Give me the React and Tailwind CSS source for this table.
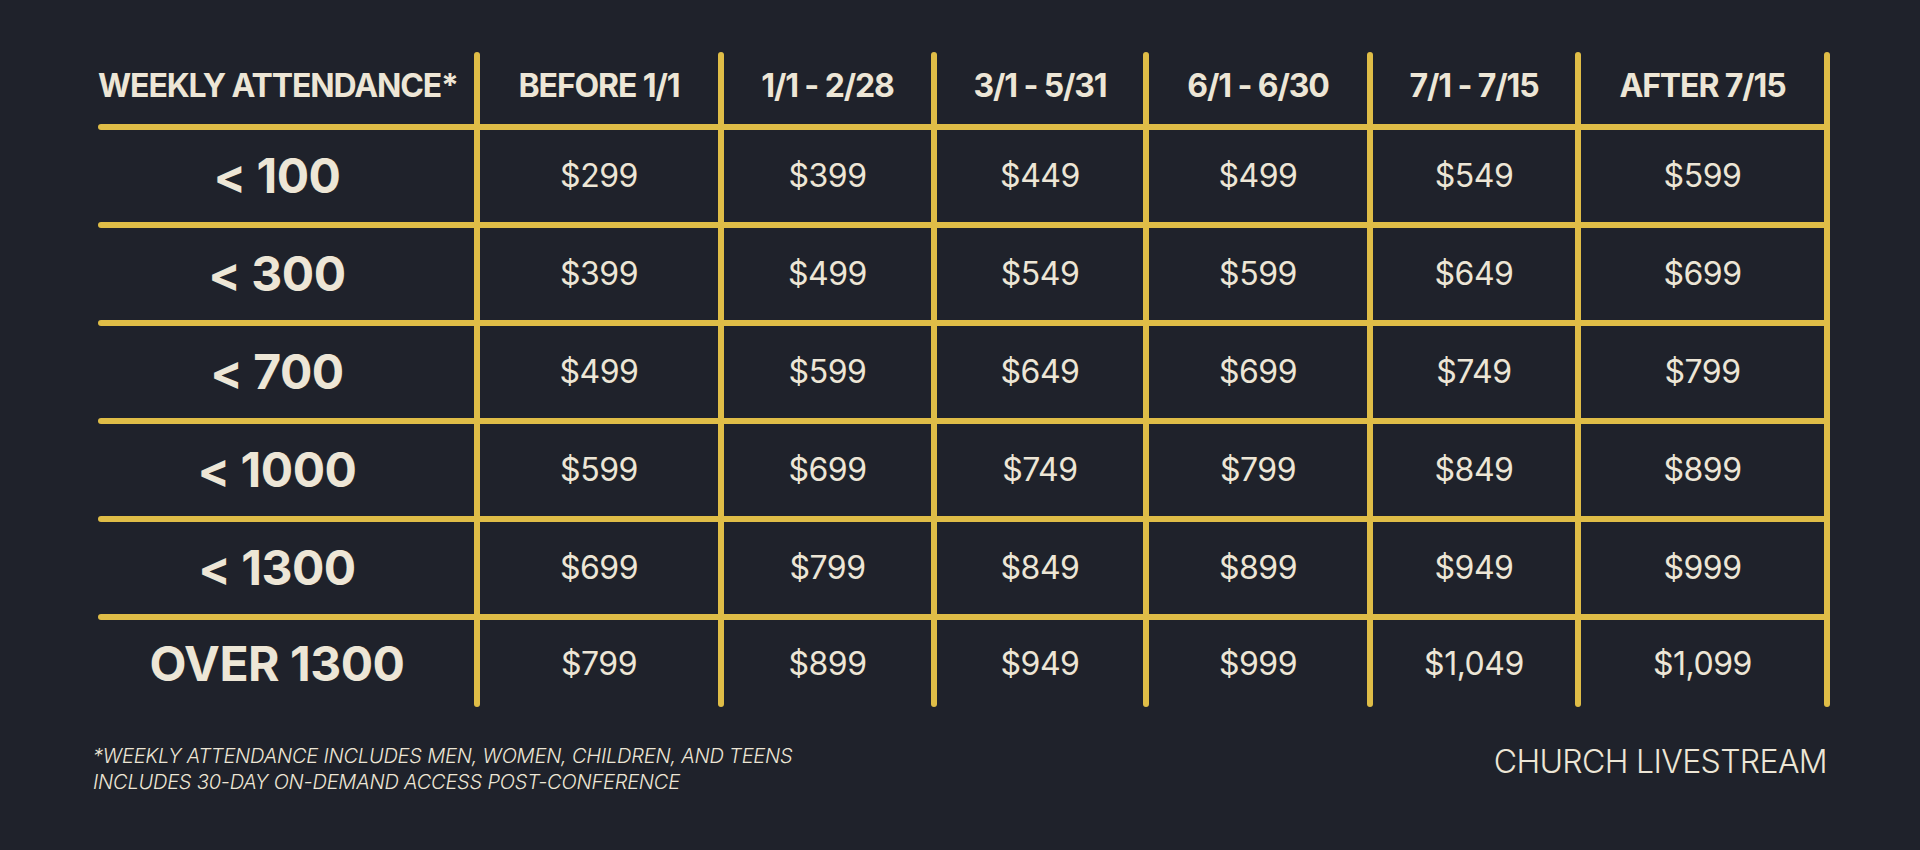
import React from 'react';

const headers = ["WEEKLY ATTENDANCE*", "BEFORE 1/1", "1/1 - 2/28", "3/1 - 5/31", "6/1 - 6/30", "7/1 - 7/15", "AFTER 7/15"];

const rows = [
  { label: "< 100", prices: ["$299", "$399", "$449", "$499", "$549", "$599"] },
  { label: "< 300", prices: ["$399", "$499", "$549", "$599", "$649", "$699"] },
  { label: "< 700", prices: ["$499", "$599", "$649", "$699", "$749", "$799"] },
  { label: "< 1000", prices: ["$599", "$699", "$749", "$799", "$849", "$899"] },
  { label: "< 1300", prices: ["$699", "$799", "$849", "$899", "$949", "$999"] },
  { label: "OVER 1300", prices: ["$799", "$899", "$949", "$999", "$1,049", "$1,099"] },
];

// widths of the price columns, between the yellow lines
const colWidths = ["w-[238px]", "w-[207px]", "w-[206px]", "w-[218px]", "w-[202px]", "w-[243px]"];

function VLine({ cap }) {
  return <div className={`w-[6px] shrink-0 bg-[#dfbd47] ${cap}`} />;
}

function HLine() {
  return <div className="h-[6px] w-[1732px] rounded-l-full bg-[#dfbd47]" />;
}

export default function App() {
  return (
    <main
      className="min-h-[850px] w-[1920px] bg-[#1f222b] pt-[52px] pl-[98px] text-[#ede6d6]"
      style={{ fontFamily: "Inter, 'Noto Sans', sans-serif" }}
    >
      <div className="flex h-[72px]">
        <div className="flex w-[376px] items-center justify-start whitespace-nowrap pb-[4px] text-[32px] font-bold tracking-[-0.035em]">
          {headers[0]}
        </div>
        {headers.slice(1).map((h, i) => (
          <React.Fragment key={h}>
            <VLine cap="rounded-t-full" />
            <div className={`flex ${colWidths[i]} items-center justify-center whitespace-nowrap pb-[4px] text-[32px] font-bold tracking-[-0.035em]`}>
              {h}
            </div>
          </React.Fragment>
        ))}
        <VLine cap="rounded-t-full" />
      </div>

      {rows.map((row, r) => {
        const last = r === rows.length - 1;
        return (
          <React.Fragment key={row.label}>
            <HLine />
            <div className={`flex ${last ? "h-[87px]" : "h-[92px]"}`}>
              <div className="flex w-[376px] items-center justify-center pr-[18px] text-[48px] font-bold tracking-[-0.01em]">
                {row.label}
              </div>
              {row.prices.map((p, i) => (
                <React.Fragment key={i}>
                  <VLine cap={last ? "rounded-b-full" : ""} />
                  <div className={`flex ${colWidths[i]} items-center justify-center text-[32px] font-normal tracking-[-0.015em]`}>
                    {p}
                  </div>
                </React.Fragment>
              ))}
              <VLine cap={last ? "rounded-b-full" : ""} />
            </div>
          </React.Fragment>
        );
      })}

      <div className="mt-[36px] flex w-[1729px] items-start justify-between">
        <div className="-ml-[5px] text-[20px] font-light italic leading-[26px] tracking-[-0.01em]">
          <p>*WEEKLY ATTENDANCE INCLUDES MEN, WOMEN, CHILDREN, AND TEENS</p>
          <p>INCLUDES 30-DAY ON-DEMAND ACCESS POST-CONFERENCE</p>
        </div>
        <div className="text-[32px] font-light leading-[38px] tracking-[-0.02em]">
          CHURCH LIVESTREAM
        </div>
      </div>
    </main>
  );
}
